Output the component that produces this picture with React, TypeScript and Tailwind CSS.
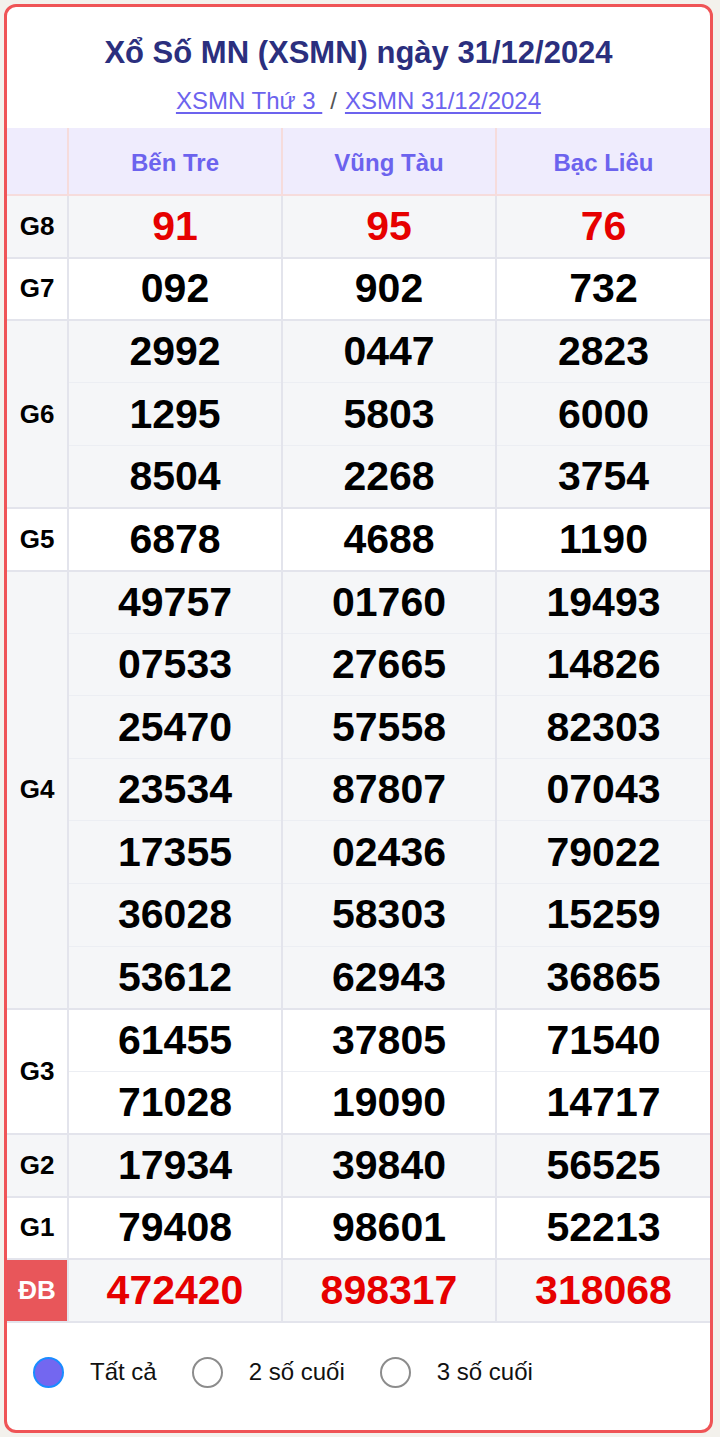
import React from "react";

type Group = { label: string; rows: string[][]; bg: string; red?: boolean; db?: boolean };

const groups: Group[] = [
  { label: "G8", rows: [["91", "95", "76"]], bg: "bg-[#f5f6f8]", red: true },
  { label: "G7", rows: [["092", "902", "732"]], bg: "bg-white" },
  {
    label: "G6",
    rows: [
      ["2992", "0447", "2823"],
      ["1295", "5803", "6000"],
      ["8504", "2268", "3754"],
    ],
    bg: "bg-[#f5f6f8]",
  },
  { label: "G5", rows: [["6878", "4688", "1190"]], bg: "bg-white" },
  {
    label: "G4",
    rows: [
      ["49757", "01760", "19493"],
      ["07533", "27665", "14826"],
      ["25470", "57558", "82303"],
      ["23534", "87807", "07043"],
      ["17355", "02436", "79022"],
      ["36028", "58303", "15259"],
      ["53612", "62943", "36865"],
    ],
    bg: "bg-[#f5f6f8]",
  },
  {
    label: "G3",
    rows: [
      ["61455", "37805", "71540"],
      ["71028", "19090", "14717"],
    ],
    bg: "bg-white",
  },
  { label: "G2", rows: [["17934", "39840", "56525"]], bg: "bg-[#f5f6f8]" },
  { label: "G1", rows: [["79408", "98601", "52213"]], bg: "bg-white" },
  { label: "ĐB", rows: [["472420", "898317", "318068"]], bg: "bg-[#f5f6f8]", red: true, db: true },
];

export default function App() {
  return (
    <div
      className="w-[720px] h-[1437px] bg-[#f3f1ec] pt-[4px] pl-[4px]"
      style={{ fontFamily: '"Liberation Sans", Arial, sans-serif' }}
    >
      <div className="w-[709px] h-[1429px] bg-white border-[3px] border-[#ef5456] rounded-[12px] overflow-hidden flex flex-col">
        <div className="h-[121px] flex flex-col items-center pt-[28px]">
          <h1 className="text-[31px] leading-[36px] font-bold text-[#2b2f7e]">
            Xổ Số MN (XSMN) ngày 31/12/2024
          </h1>
          <div className="mt-[16px] text-[24px] leading-[28px] text-[#6c63ee] flex items-center">
            <span className="underline underline-offset-[3px] whitespace-pre">XSMN Thứ 3 </span>
            <span className="text-[#555] mx-[8px]">/</span>
            <span className="underline underline-offset-[3px]">XSMN 31/12/2024</span>
          </div>
        </div>
        <table className="w-[703px] border-collapse table-fixed">
          <colgroup>
            <col className="w-[61px]" />
            <col className="w-[214px]" />
            <col className="w-[214px]" />
            <col className="w-[214px]" />
          </colgroup>
          <thead>
            <tr className="h-[67px] bg-[#efecfd]">
              <th className="border-2 border-[#f6dcdc] border-l-0 border-t-0"></th>
              {["Bến Tre", "Vũng Tàu", "Bạc Liêu"].map((n) => (
                <th
                  key={n}
                  className="border-2 border-[#f6dcdc] border-t-0 last:border-r-0 pt-[4px] text-[24px] font-bold text-[#6c63ee]"
                >
                  {n}
                </th>
              ))}
            </tr>
          </thead>
          <tbody>
            {groups.map((g) =>
              g.rows.map((r, i) => (
                <tr key={g.label + i} className={`h-[62.6px] ${g.bg}`}>
                  {i === 0 && (
                    <td
                      rowSpan={g.rows.length}
                      className={`border-2 border-[#e3e4ec] border-l-0 text-center text-[26px] font-bold ${
                        g.db ? "bg-[#e8565a] text-white" : "text-black"
                      }`}
                    >
                      {g.label}
                    </td>
                  )}
                  {r.map((n, j) => (
                    <td
                      key={j}
                      className={`border-x-2 border-[#e3e4ec] last:border-r-0 text-center text-[41px] leading-none font-bold ${
                        g.red ? "text-[#e60000]" : "text-black"
                      } ${i === 0 ? "border-t-2" : "border-t border-t-[#eceef3]"} ${
                        i === g.rows.length - 1 ? "border-b-2" : ""
                      }`}
                    >
                      {n}
                    </td>
                  ))}
                </tr>
              ))
            )}
          </tbody>
        </table>
        <div className="flex items-center pl-[26px] mt-[34px] text-[24px] leading-[30px] text-[#111]">
          <span className="w-[31px] h-[31px] rounded-full bg-[#7367f0] border-2 border-[#1a8cff]" />
          <span className="ml-[26px]">Tất cả</span>
          <span className="ml-[35px] w-[31px] h-[31px] rounded-full bg-white border-2 border-[#8c8c8c]" />
          <span className="ml-[26px]">2 số cuối</span>
          <span className="ml-[35px] w-[31px] h-[31px] rounded-full bg-white border-2 border-[#8c8c8c]" />
          <span className="ml-[26px]">3 số cuối</span>
        </div>
      </div>
    </div>
  );
}
